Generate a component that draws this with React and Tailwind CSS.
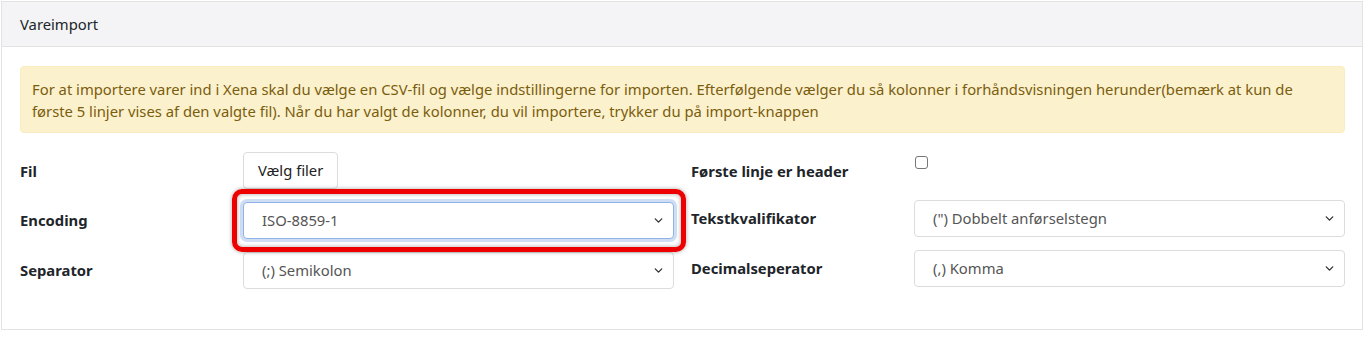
import { ChevronDown } from "lucide-react";

function Select({ value, focused }) {
  return (
    <div
      className={
        "flex h-[37px] w-full items-center justify-between rounded-[4px] border bg-white pl-[18px] pr-[8px] text-[14.8px] text-[#555] " +
        (focused ? "border-[#8fb3e6] shadow-[0_0_0_3px_rgba(120,160,220,0.35)]" : "border-[#dcdcdc]")
      }
    >
      <span>{value}</span>
      <ChevronDown className="h-[13px] w-[13px] text-[#333]" strokeWidth={2.5} />
    </div>
  );
}

export default function App() {
  return (
    <div className="h-[338px] w-[1368px] bg-white pl-px pt-px font-['Noto_Sans',sans-serif] text-[#212529]">
      <div className="w-[1362px] border border-[#e3e3e3]">
        <div className="flex h-[45px] items-center border-b border-[#e3e3e3] bg-[#f4f4f6] px-[18px] text-[14.8px]">
          Vareimport
        </div>
        <div className="pl-[18px] pr-[17px] pt-[19px] pb-[34px]">
          <div className="rounded-[4px] border border-[#faecc0] bg-[#fcf1cd] px-[11px] pt-[11px] pb-[10px] text-[14.8px] leading-[22px] text-[#7a5d0e]">
            For at importere varer ind i Xena skal du vælge en CSV-fil og vælge indstillingerne for importen. Efterfølgende vælger du så kolonner i forhåndsvisningen herunder(bemærk at kun de første 5 linjer vises af den valgte fil). Når du har valgt de kolonner, du vil importere, trykker du på import-knappen
          </div>
          <div className="mt-[12px] flex">
            <div className="w-[654px]">
              <div className="flex h-[50px] items-center">
                <div className="w-[223px] pt-[2px] text-[14.8px] font-bold">Fil</div>
                <button className="h-[37px] rounded-[4px] border border-[#dcdcdc] bg-white px-[14px] text-[14.8px] text-[#222]">
                  Vælg filer
                </button>
              </div>
              <div className="flex h-[50px] items-center">
                <div className="w-[223px] text-[14.8px] font-bold">Encoding</div>
                <div className="relative flex-1">
                  <Select value="ISO-8859-1" focused />
                  <div className="pointer-events-none absolute -top-[13px] -bottom-[13px] -left-[11px] -right-[12px] rounded-[10px] border-[5px] border-[#ee0000] shadow-[0_0_4px_rgba(0,0,0,0.35),inset_0_0_4px_rgba(0,0,0,0.35)]" />
                </div>
              </div>
              <div className="flex h-[50px] items-center">
                <div className="w-[223px] text-[14.8px] font-bold">Separator</div>
                <div className="flex-1">
                  <Select value="(;) Semikolon" />
                </div>
              </div>
            </div>
            <div className="ml-[17px] flex-1">
              <div className="flex h-[48px] items-start">
                <div className="w-[223px] pt-[15px] text-[14.8px] font-bold">Første linje er header</div>
                <div className="mt-[11px] ml-[1px] h-[13px] w-[13px] rounded-[3px] border border-[#767676] bg-white" />
              </div>
              <div className="flex h-[50px] items-center">
                <div className="w-[223px] text-[14.8px] font-bold">Tekstkvalifikator</div>
                <div className="flex-1">
                  <Select value={'(") Dobbelt anførselstegn'} />
                </div>
              </div>
              <div className="flex h-[50px] items-center">
                <div className="w-[223px] text-[14.8px] font-bold">Decimalseperator</div>
                <div className="flex-1">
                  <Select value="(,) Komma" />
                </div>
              </div>
            </div>
          </div>
        </div>
      </div>
    </div>
  );
}
